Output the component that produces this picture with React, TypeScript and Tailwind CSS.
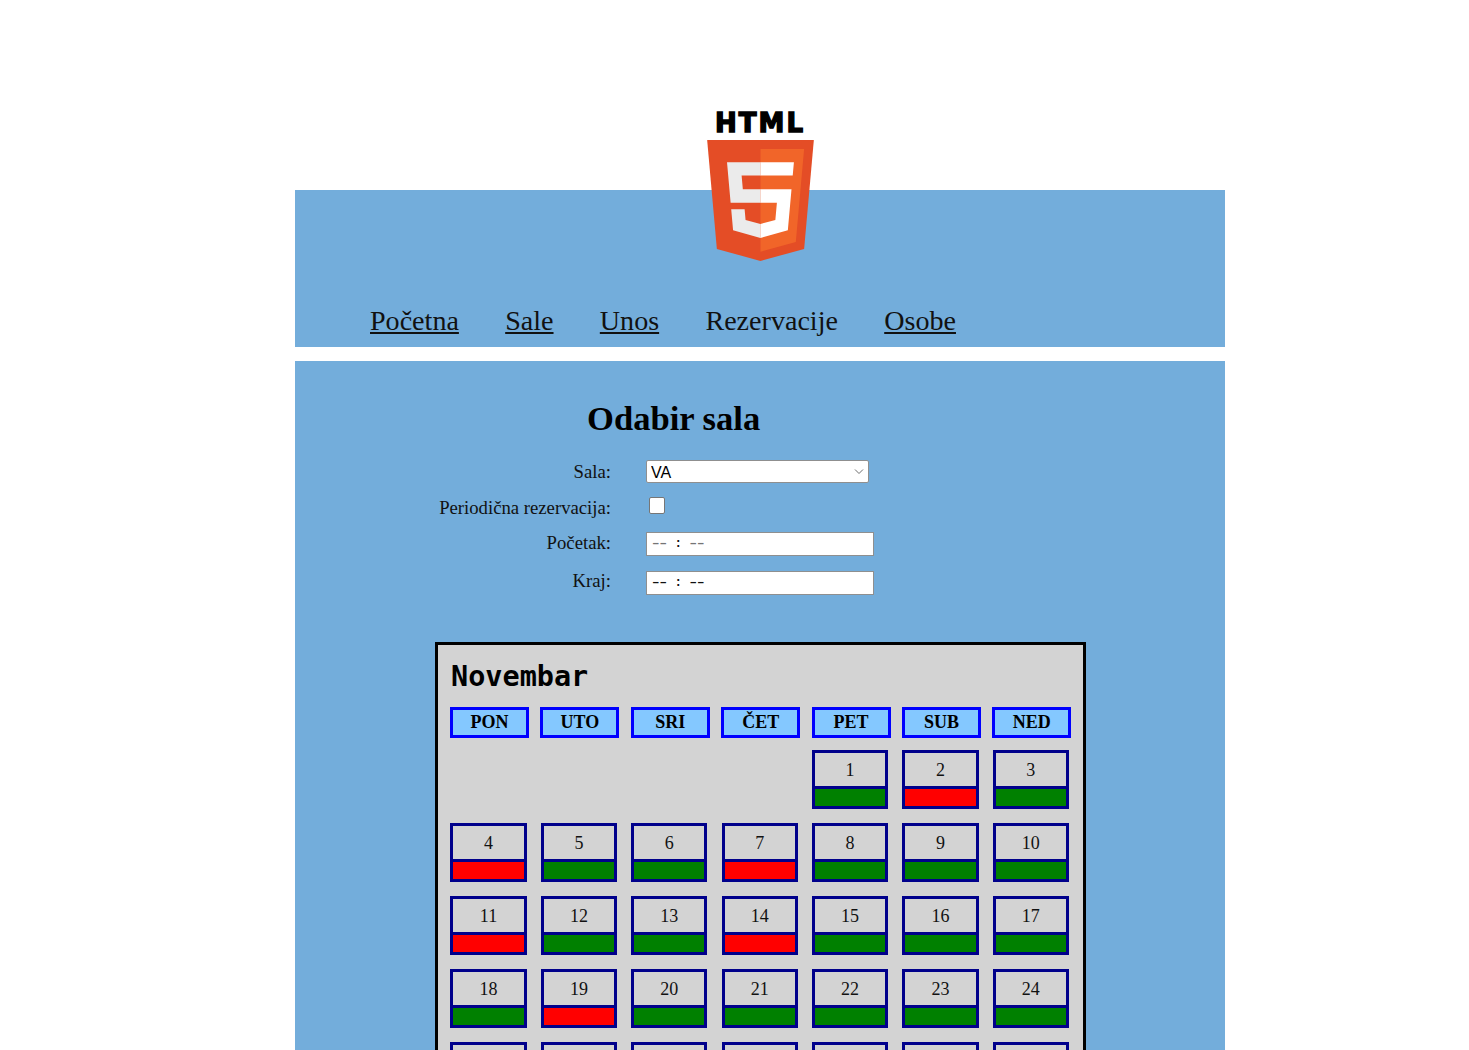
import React from "react";

const navLinks = [
  { label: "Početna", underline: true },
  { label: "Sale", underline: true },
  { label: "Unos", underline: true },
  { label: "Rezervacije", underline: false },
  { label: "Osobe", underline: true },
];

const weekDays = ["PON", "UTO", "SRI", "ČET", "PET", "SUB", "NED"];

// dani u novembru koji su zauzeti
const busyDays = [2, 4, 7, 11, 14, 19];

function Logo() {
  return (
    <div className="relative z-10 -mb-[72px] flex h-[154px] flex-col items-center">
      <div className="h-[32px] pt-[1px] font-['DejaVu_Sans',sans-serif] text-[26px] leading-[28px] font-bold tracking-[2px] text-black [-webkit-text-stroke:1.4px_black]">
        HTML
      </div>
      <svg width="107" height="121" viewBox="74.6 100.6 362.8 411.4">
        <polygon fill="#E44D26" points="107.644,470.877 74.633,100.62 437.367,100.62 404.321,470.819 255.778,512" />
        <polygon fill="#F16529" points="256,480.523 376.03,447.246 404.27,130.894 256,130.894" />
        <polygon fill="#EBEBEB" points="256,268.217 195.91,268.217 191.76,221.716 256,221.716 256,176.305 255.843,176.305 142.132,176.305 143.219,188.488 154.38,313.627 256,313.627" />
        <polygon fill="#EBEBEB" points="256,386.153 255.801,386.206 205.227,372.55 201.994,336.333 177.419,336.333 156.409,336.333 162.771,407.634 255.791,433.457 256,433.399" />
        <polygon fill="#FFFFFF" points="255.843,268.217 255.843,313.627 311.761,313.627 306.49,372.521 255.843,386.191 255.843,433.435 348.937,407.634 349.62,399.962 360.291,280.411 361.399,268.217 349.162,268.217" />
        <polygon fill="#FFFFFF" points="255.843,176.305 255.843,204.509 255.843,221.605 255.843,221.716 365.385,221.716 365.531,221.716 366.442,211.509 368.511,188.488 369.597,176.305" />
      </svg>
    </div>
  );
}

function FormRow({ label, children, className }: { label: string; children: React.ReactNode; className: string }) {
  return (
    <div className={`flex items-start ${className}`}>
      <label className="w-[316px] text-right text-[18.72px] leading-[21px]">{label}</label>
      <div className="ml-[35px]">{children}</div>
    </div>
  );
}

function TimeField({ color }: { color: string }) {
  return (
    <div className={`h-[24px] w-[228px] border border-[#8f8f8f] bg-white pl-[5px] font-['Liberation_Mono',monospace] text-[12.5px] leading-[23px] font-bold ${color}`}>
      –– <span className="text-[#111]">:</span> ––
    </div>
  );
}

function DayCell({ day }: { day: number }) {
  const busy = busyDays.includes(day);
  return (
    <div className="flex h-[59px] w-[76.2px] flex-col border-[3px] border-[#00008b]">
      <div className="h-[33px] pt-[5px] text-center text-[18px] leading-[24px] text-[#111]">{day}</div>
      <div className={`flex-1 border-t-[3px] border-[#00008b] ${busy ? "bg-[#ff0000]" : "bg-[#008000]"}`} />
    </div>
  );
}

export default function App() {
  const days = Array.from({ length: 31 }, (_, i) => i + 1);

  return (
    <div className="h-screen overflow-hidden bg-white font-['Liberation_Serif',serif] text-black">
      <div className="ml-[295px] w-[930px] pt-[108px]">
        <Logo />

        <header className="h-[157px] bg-[#73addb] pt-[114px] pl-[75px]">
          <nav className="flex gap-[46.3px] text-[28.08px] leading-[33px] text-[#111]">
            {navLinks.map((link) => (
              <a key={link.label} className={link.underline ? "underline" : ""}>
                {link.label}
              </a>
            ))}
          </nav>
        </header>

        <main className="mt-[14px] bg-[#73addb] pt-[37px] pb-[40px]">
          <h1 className="ml-[292px] text-[34.6px] leading-[41px] font-bold">Odabir sala</h1>

          <form className="mt-[21px] text-[#111]">
            <FormRow label="Sala:" className="h-[36px] pt-[1px]">
              <div className="relative -mt-[1px] h-[23px] w-[223px]">
                <select className="h-full w-full appearance-none rounded-[2px] border border-[#8f8f8f] bg-white pt-[2px] pl-[4px] font-['Liberation_Sans',sans-serif] text-[16px] leading-[18px] text-black">
                  <option>VA</option>
                </select>
                <svg className="absolute top-[8px] right-[5px]" width="10" height="7" viewBox="0 0 10 7" fill="none" stroke="#6e6e6e" strokeWidth="1">
                  <path d="M1 1.5 L5 5.5 L9 1.5" />
                </svg>
              </div>
            </FormRow>
            <FormRow label="Periodična rezervacija:" className="h-[35px] pt-[1px]">
              <div className="ml-[3px] h-[17px] w-[16px] rounded-[2px] border border-[#767676] bg-white" />
            </FormRow>
            <FormRow label="Početak:" className="h-[38px] pt-[1px]">
              <TimeField color="text-[#757575]" />
            </FormRow>
            <FormRow label="Kraj:" className="h-[73px] pt-[1px]">
              <div className="mt-[1px]">
                <TimeField color="text-[#111]" />
              </div>
            </FormRow>
          </form>

          <section className="ml-[140px] w-[651px] border-[3px] border-black bg-[#d3d3d3] px-[12px] pt-[15px] pb-[20px]">
            <h2 className="pl-[1px] font-['DejaVu_Sans_Mono',monospace] text-[28.5px] leading-[34px] font-bold">Novembar</h2>
            <div className="mt-[13px] grid grid-cols-[repeat(7,79px)] gap-x-[11.4px]">
              {weekDays.map((d) => (
                <div key={d} className="h-[31px] border-[3px] border-[#0000ff] bg-[#84c8ff] text-center text-[18px] leading-[25px] font-bold">
                  {d}
                </div>
              ))}
            </div>
            <div className="mt-[12px] ml-[0.4px] grid grid-cols-[repeat(7,79px)] gap-x-[11.4px] gap-y-[14px]">
              <div className="col-start-5">
                <DayCell day={1} />
              </div>
              {days.slice(1).map((d) => (
                <DayCell key={d} day={d} />
              ))}
            </div>
          </section>
        </main>
      </div>
    </div>
  );
}
